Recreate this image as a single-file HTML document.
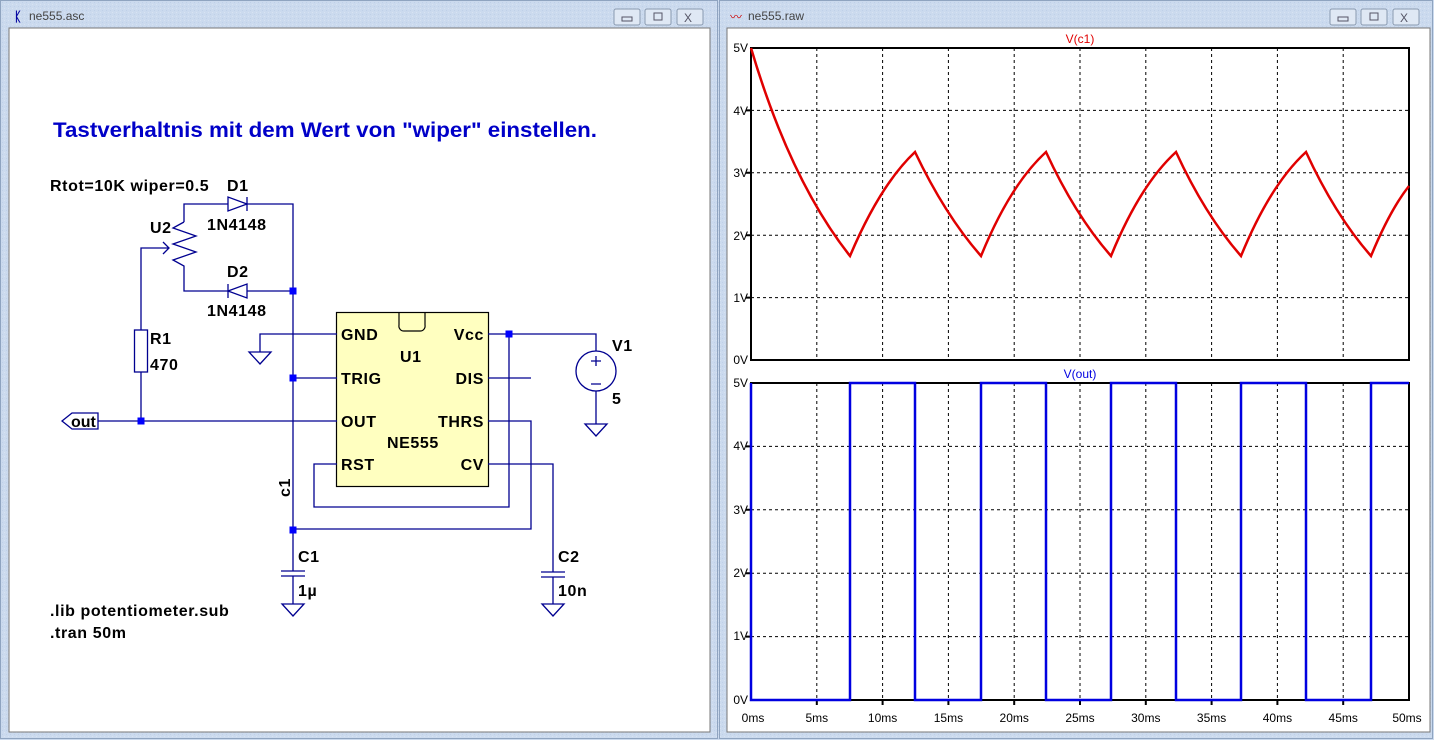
<!DOCTYPE html>
<html><head><meta charset="utf-8"><style>
html,body{margin:0;padding:0;width:1434px;height:740px;overflow:hidden;background:#cfdcee}
svg{display:block}
.t{font-family:"Liberation Sans",sans-serif;font-weight:bold;font-size:16px;letter-spacing:0.6px;fill:#000}
.w{stroke:#000090;stroke-width:1.3;fill:none}
.j{fill:#0000ff}
.ax{font-family:"Liberation Sans",sans-serif;font-size:12px;fill:#000}
</style></head><body>
<svg width="1434" height="740" viewBox="0 0 1434 740">
<defs>
<pattern id="fr" width="4" height="4" patternUnits="userSpaceOnUse"><rect width="4" height="4" fill="#cbdaee"/><rect width="1" height="1" fill="#d8e3f2"/><rect x="2" y="2" width="1" height="1" fill="#bfd0e8"/></pattern>
</defs>
<rect width="1434" height="740" fill="url(#fr)"/>
<rect x="0.5" y="0.5" width="717" height="738" fill="none" stroke="#8fa4c0"/>
<text x="14" y="21" font-family="Liberation Sans" font-size="13" font-weight="bold" fill="#0000a0">ᛕ</text>
<text x="29" y="20" font-family="Liberation Sans" font-size="12" fill="#444">ne555.asc</text>
<g fill="#dfe8f4" stroke="#8a9ab0"><rect x="614" y="9" width="26" height="16" rx="2"/><rect x="645" y="9" width="26" height="16" rx="2"/><rect x="677" y="9" width="26" height="16" rx="2"/></g>
<rect x="622" y="17" width="10" height="4" fill="none" stroke="#556"/><rect x="654" y="13" width="8" height="7" fill="none" stroke="#556"/>
<text x="684" y="22" font-family="Liberation Sans" font-size="12" fill="#556">X</text>
<rect x="9" y="28" width="701" height="704" fill="#fff" stroke="#777"/>
<rect x="719.5" y="0.5" width="713" height="738" fill="none" stroke="#8fa4c0"/>
<text x="730" y="21" font-family="Liberation Sans" font-size="12" fill="#c00">〰</text>
<text x="748" y="20" font-family="Liberation Sans" font-size="12" fill="#444">ne555.raw</text>
<g fill="#dfe8f4" stroke="#8a9ab0"><rect x="1330" y="9" width="26" height="16" rx="2"/><rect x="1361" y="9" width="26" height="16" rx="2"/><rect x="1393" y="9" width="26" height="16" rx="2"/></g>
<rect x="1338" y="17" width="10" height="4" fill="none" stroke="#556"/><rect x="1370" y="13" width="8" height="7" fill="none" stroke="#556"/>
<text x="1400" y="22" font-family="Liberation Sans" font-size="12" fill="#556">X</text>
<rect x="727" y="28" width="703" height="704" fill="#fff" stroke="#777"/>

<text x="53" y="137" font-family="Liberation Sans" font-weight="bold" font-size="21" fill="#0000c8" textLength="544" lengthAdjust="spacingAndGlyphs">Tastverhaltnis mit dem Wert von "wiper" einstellen.</text>
<text class="t" x="50" y="191">Rtot=10K wiper=0.5</text>
<text class="t" x="227" y="191">D1</text>
<text class="t" x="207" y="230">1N4148</text>
<text class="t" x="150" y="233">U2</text>
<text class="t" x="227" y="277">D2</text>
<text class="t" x="207" y="316">1N4148</text>
<text class="t" x="150" y="344">R1</text>
<text class="t" x="150" y="370">470</text>
<text class="t" x="612" y="351">V1</text>
<text class="t" x="612" y="404">5</text>
<text class="t" x="298" y="562">C1</text>
<text class="t" x="298" y="596">1µ</text>
<text class="t" x="558" y="562">C2</text>
<text class="t" x="558" y="596">10n</text>
<text class="t" x="290" y="497" transform="rotate(-90 290 497)">c1</text>
<text class="t" x="50" y="616">.lib potentiometer.sub</text>
<text class="t" x="50" y="638">.tran 50m</text>

<rect x="336.5" y="312.5" width="152" height="174" fill="#ffffc0" stroke="#000" stroke-width="1.2"/>
<path d="M399,312 V325 A5,5 0 0 0 404,331 H420 A5,5 0 0 0 425,325 V312" fill="none" stroke="#000" stroke-width="1.2"/>
<text class="t" x="341" y="340">GND</text><text class="t" x="341" y="384">TRIG</text><text class="t" x="341" y="427">OUT</text><text class="t" x="341" y="470">RST</text>
<text class="t" x="484" y="340" text-anchor="end">Vcc</text><text class="t" x="484" y="384" text-anchor="end">DIS</text><text class="t" x="484" y="427" text-anchor="end">THRS</text><text class="t" x="484" y="470" text-anchor="end">CV</text>
<text class="t" x="400" y="362">U1</text><text class="t" x="387" y="448">NE555</text>

<g class="w">
<path d="M184,222 V204 H228 M247,204 H293 V530"/>
<path d="M228,197 V211 L247,204 Z M247,197 V211"/>
<path d="M184,273 V291 H228 M247,291 H293"/>
<path d="M247,284 V298 L228,291 Z M228,284 V298"/>
<path d="M184,222 L173,228 L196,236 L173,244 L196,252 L173,260 L184,266 V273"/>
<path d="M141,421 V372 M141,330 V248 H168 M163,242 L169,248 L163,254"/>
<rect x="134.5" y="330" width="13" height="42"/>
<path d="M98,421 H337 M293,378 H337"/>
<path d="M337,334 H260 V352 M249,352 H271 L260,364 Z"/>
<path d="M488,334 H596 V351 M596,391 V424 M585,424 H607 L596,436 Z"/>
<circle cx="596" cy="371" r="20"/>
<path d="M591,361 H601 M596,356 V366 M591,384 H601"/>
<path d="M509,334 V507 H314 V464 H337"/>
<path d="M488,378 H531"/>
<path d="M488,421 H531 V529 H293"/>
<path d="M488,464 H553 V572 M541,572 H565 M541,577 H565 M553,577 V604 M542,604 H564 L553,616 Z"/>
<path d="M293,530 V571 M281,571 H305 M281,576 H305 M293,576 V604 M282,604 H304 L293,616 Z"/>
<path d="M98,421 V413 H72 L62,421 L72,429 H98 Z"/>
</g>
<text class="t" x="71" y="427" style="letter-spacing:0">out</text>
<g class="j"><rect x="289.5" y="287.5" width="7" height="7"/><rect x="289.5" y="374.5" width="7" height="7"/><rect x="137.5" y="417.5" width="7" height="7"/><rect x="505.5" y="330.5" width="7" height="7"/><rect x="289.5" y="526.5" width="7" height="7"/></g>

<g stroke="#000" stroke-dasharray="3,3" stroke-width="1">
<path d="M816.8,48V360M882.6,48V360M948.4,48V360M1014.2,48V360M1080,48V360M1145.8,48V360M1211.6,48V360M1277.4,48V360M1343.2,48V360"/>
<path d="M751,110.4H1409M751,172.8H1409M751,235.2H1409M751,297.6H1409"/>
<path d="M816.8,383V700M882.6,383V700M948.4,383V700M1014.2,383V700M1080,383V700M1145.8,383V700M1211.6,383V700M1277.4,383V700M1343.2,383V700"/>
<path d="M751,446.4H1409M751,509.8H1409M751,573.2H1409M751,636.6H1409"/>
</g>
<path d="M751,48H1409V360H751Z M751,383H1409V700H751Z" fill="none" stroke="#000" stroke-width="2"/>
<g stroke="#000" stroke-width="2"><path d="M751,110.4h-5M751,172.8h-5M751,235.2h-5M751,297.6h-5M751,446.4h-5M751,509.8h-5M751,573.2h-5M751,636.6h-5M816.8,700v5M882.6,700v5M948.4,700v5M1014.2,700v5M1080,700v5M1145.8,700v5M1211.6,700v5M1277.4,700v5M1343.2,700v5"/></g>
<g class="ax" text-anchor="end">
<text x="748" y="52">5V</text><text x="748" y="115">4V</text><text x="748" y="177">3V</text><text x="748" y="240">2V</text><text x="748" y="302">1V</text><text x="748" y="364">0V</text>
<text x="748" y="387">5V</text><text x="748" y="450">4V</text><text x="748" y="514">3V</text><text x="748" y="577">2V</text><text x="748" y="640">1V</text><text x="748" y="704">0V</text>
</g>
<g class="ax" text-anchor="middle">
<text x="753" y="722">0ms</text><text x="816.8" y="722">5ms</text><text x="882.6" y="722">10ms</text><text x="948.4" y="722">15ms</text><text x="1014.2" y="722">20ms</text><text x="1080" y="722">25ms</text><text x="1145.8" y="722">30ms</text><text x="1211.6" y="722">35ms</text><text x="1277.4" y="722">40ms</text><text x="1343.2" y="722">45ms</text><text x="1407" y="722">50ms</text>
</g>
<text class="ax" x="1080" y="43" text-anchor="middle" style="fill:#e00000">V(c1)</text>
<text class="ax" x="1080" y="378" text-anchor="middle" style="fill:#0000e0">V(out)</text>
<path d="M751,48 Q790,180 850,256 Q880,185 915,152 Q945,215 981,256 Q1010,185 1046,152 Q1075,215 1111,256 Q1140,185 1176,152 Q1205,215 1241,256 Q1270,185 1306,152 Q1335,215 1371,256 Q1390,210 1409,186" fill="none" stroke="#e00000" stroke-width="2.5"/>
<path d="M751,383 V700 H850 V383 H915 V700 H981 V383 H1046 V700 H1111 V383 H1176 V700 H1241 V383 H1306 V700 H1371 V383 H1409" fill="none" stroke="#0000e0" stroke-width="2.5"/>
</svg>
</body></html>
